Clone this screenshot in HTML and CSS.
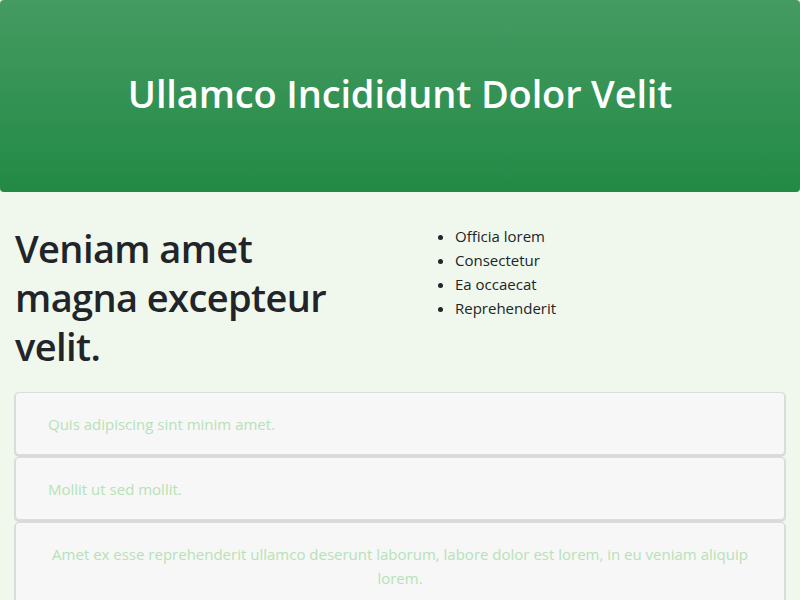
FILE: index.html
```html
<!DOCTYPE html>
<html lang="en">
<head>
<meta charset="utf-8">
<title>Ullamco Incididunt Dolor Velit</title>
<link rel="stylesheet" href="styles.css">
</head>
<body>
<header class="hero">
  <h1 class="hero-title">Ullamco Incididunt Dolor Velit</h1>
</header>
<main class="content">
  <section class="intro">
    <h2 class="intro-title">Veniam amet magna excepteur velit.</h2>
    <ul class="intro-list">
      <li>Officia lorem</li>
      <li>Consectetur</li>
      <li>Ea occaecat</li>
      <li>Reprehenderit</li>
    </ul>
  </section>
  <section class="cards">
    <div class="card">Quis adipiscing sint minim amet.</div>
    <div class="card">Mollit ut sed mollit.</div>
    <div class="card card-center">Amet ex esse reprehenderit ullamco deserunt laborum, labore dolor est lorem, in eu veniam aliquip lorem.</div>
  </section>
</main>
</body>
</html>
```

FILE: styles.css
```css
* { box-sizing: border-box; }
html, body { margin: 0; padding: 0; }
body {
  background: #f0f7ec;
  color: #212529;
  font-family: "Open Sans", "Noto Sans", sans-serif;
  font-size: 16px;
  line-height: 1.5;
}
.hero {
  height: 192px;
  padding-bottom: 4px;
  border-radius: 4px;
  background: linear-gradient(to bottom, #459b62, #228a45);
  display: flex;
  align-items: center;
  justify-content: center;
}
.hero-title {
  margin: 0;
  color: #fff;
  font-size: 38px;
  font-weight: 600;
  line-height: 1.2;
  letter-spacing: -0.15px;
}
.content {
  padding: 32px 15px 0;
}
.intro {
  display: grid;
  grid-template-columns: 1fr 1fr;
  column-gap: 30px;
}
.intro-title {
  margin: 0 0 21px;
  max-width: 340px;
  font-size: 38px;
  font-weight: 600;
  line-height: 49px;
  letter-spacing: -0.6px;
}
.intro-list {
  margin: 0;
  padding-left: 40px;
  font-size: 15px;
  line-height: 24px;
}
.cards {
  display: flex;
  flex-direction: column;
  gap: 2px;
}
.card {
  background: #f7f7f7;
  border: 1px solid #dcdcdc;
  border-radius: 4px;
  box-shadow: 0 1px 0 1px #dadada;
  padding: 18.5px 32px;
  color: #b6e2b6;
  font-size: 15px;
  line-height: 24px;
}
.card-center { text-align: center; }
```
